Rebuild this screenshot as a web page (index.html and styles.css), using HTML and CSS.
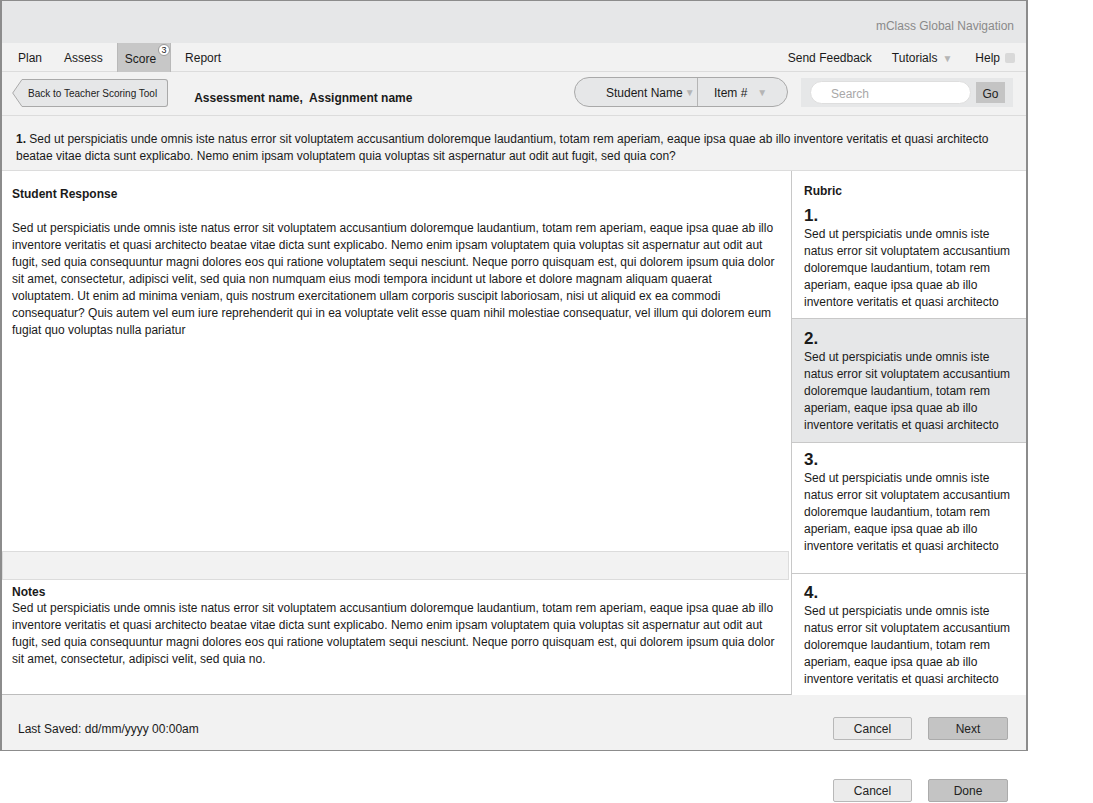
FILE: index.html
```html
<!DOCTYPE html>
<html lang="en">
<head>
<meta charset="utf-8">
<title>Teacher Scoring Tool</title>
<link rel="stylesheet" href="styles.css">
</head>
<body>
<div class="frame">
  <header class="global">mClass Global Navigation</header>

  <nav class="nav">
    <div class="nav-left">
      <span class="nav-item">Plan</span>
      <span class="nav-item">Assess</span>
      <span class="nav-item nav-tab">Score<span class="badge">3</span></span>
      <span class="nav-item">Report</span>
    </div>
    <div class="nav-right">
      <span class="nav-link">Send Feedback</span>
      <span class="nav-link">Tutorials <span class="caret">&#9660;</span></span>
      <span class="nav-link help">Help <span class="help-box"></span></span>
    </div>
  </nav>

  <div class="toolbar">
    <button class="back" type="button">
      <svg class="back-arrow" width="10" height="28" viewBox="0 0 10 28">
        <polygon points="10,0.5 0.7,14 10,27.5" fill="#e6e7e8"/>
        <polyline points="10,0.5 0.7,14 10,27.5" fill="none" stroke="#a9a9a9" stroke-width="1"/>
      </svg>
      <span class="back-body">Back to Teacher Scoring Tool</span>
    </button>
    <div class="title">Assessment name,&nbsp; Assignment name</div>
    <div class="segmented">
      <div class="seg seg-student">Student Name<span class="caret">&#9660;</span></div>
      <div class="seg seg-item">Item #<span class="caret caret-item">&#9660;</span></div>
    </div>
    <div class="search">
      <div class="search-input">Search</div>
      <button class="go" type="button">Go</button>
    </div>
  </div>

  <div class="question">
    <b>1.</b> Sed ut perspiciatis unde omnis iste natus error sit voluptatem accusantium doloremque laudantium, totam rem aperiam, eaque ipsa quae ab illo inventore veritatis et quasi architecto<br>
    beatae vitae dicta sunt explicabo. Nemo enim ipsam voluptatem quia voluptas sit aspernatur aut odit aut fugit, sed quia con?
  </div>

  <div class="main">
    <div class="left">
      <section class="response">
        <h2>Student Response</h2>
        <p>Sed ut perspiciatis unde omnis iste natus error sit voluptatem accusantium doloremque laudantium, totam rem aperiam, eaque ipsa quae ab illo<br>
        inventore veritatis et quasi architecto beatae vitae dicta sunt explicabo. Nemo enim ipsam voluptatem quia voluptas sit aspernatur aut odit aut<br>
        fugit, sed quia consequuntur magni dolores eos qui ratione voluptatem sequi nesciunt. Neque porro quisquam est, qui dolorem ipsum quia dolor<br>
        sit amet, consectetur, adipisci velit, sed quia non numquam eius modi tempora incidunt ut labore et dolore magnam aliquam quaerat<br>
        voluptatem. Ut enim ad minima veniam, quis nostrum exercitationem ullam corporis suscipit laboriosam, nisi ut aliquid ex ea commodi<br>
        consequatur? Quis autem vel eum iure reprehenderit qui in ea voluptate velit esse quam nihil molestiae consequatur, vel illum qui dolorem eum<br>
        fugiat quo voluptas nulla pariatur</p>
      </section>
      <div class="strip"></div>
      <section class="notes">
        <h2>Notes</h2>
        <p>Sed ut perspiciatis unde omnis iste natus error sit voluptatem accusantium doloremque laudantium, totam rem aperiam, eaque ipsa quae ab illo<br>
        inventore veritatis et quasi architecto beatae vitae dicta sunt explicabo. Nemo enim ipsam voluptatem quia voluptas sit aspernatur aut odit aut<br>
        fugit, sed quia consequuntur magni dolores eos qui ratione voluptatem sequi nesciunt. Neque porro quisquam est, qui dolorem ipsum quia dolor<br>
        sit amet, consectetur, adipisci velit, sed quia no.</p>
      </section>
    </div>

    <aside class="rubric">
      <h2>Rubric</h2>
      <div class="r-item r-1">
        <div class="r-num">1.</div>
        <p>Sed ut perspiciatis unde omnis iste<br>natus error sit voluptatem accusantium<br>doloremque laudantium, totam rem<br>aperiam, eaque ipsa quae ab illo<br>inventore veritatis et quasi architecto</p>
      </div>
      <div class="r-item r-2 selected">
        <div class="r-num">2.</div>
        <p>Sed ut perspiciatis unde omnis iste<br>natus error sit voluptatem accusantium<br>doloremque laudantium, totam rem<br>aperiam, eaque ipsa quae ab illo<br>inventore veritatis et quasi architecto</p>
      </div>
      <div class="r-item r-3">
        <div class="r-num">3.</div>
        <p>Sed ut perspiciatis unde omnis iste<br>natus error sit voluptatem accusantium<br>doloremque laudantium, totam rem<br>aperiam, eaque ipsa quae ab illo<br>inventore veritatis et quasi architecto</p>
      </div>
      <div class="r-item r-4">
        <div class="r-num">4.</div>
        <p>Sed ut perspiciatis unde omnis iste<br>natus error sit voluptatem accusantium<br>doloremque laudantium, totam rem<br>aperiam, eaque ipsa quae ab illo<br>inventore veritatis et quasi architecto</p>
      </div>
    </aside>
  </div>

  <footer class="footer">
    <span class="saved">Last Saved: dd/mm/yyyy 00:00am</span>
    <div class="actions">
      <button class="btn" type="button">Cancel</button>
      <button class="btn btn-primary" type="button">Next</button>
    </div>
  </footer>
</div>

<div class="outer-actions">
  <button class="btn" type="button">Cancel</button>
  <button class="btn btn-primary" type="button">Done</button>
</div>
</body>
</html>
```

FILE: styles.css
```css
* { box-sizing: border-box; }

body {
  margin: 0;
  font-family: "Liberation Sans", Arial, sans-serif;
  font-size: 12px;
  color: #1a1a1a;
  background: #ffffff;
}

button { font-family: inherit; }

.frame {
  width: 1028px;
  border: 1px solid #8c8c8c;
  border-left-width: 2px;
  border-right-width: 2px;
}

/* global header */
.global {
  height: 42px;
  background: #e6e7e8;
  display: flex;
  justify-content: flex-end;
  align-items: flex-start;
  padding: 18px 12px 0 0;
  line-height: 14px;
  color: #8a8a8a;
}

/* nav */
.nav {
  height: 29px;
  background: #f2f2f2;
  border-bottom: 1px solid #dcdcdc;
  display: flex;
  align-items: stretch;
}
.nav-left {
  display: flex;
  gap: 6px;
  padding-left: 8px;
}
.nav-item {
  display: flex;
  align-items: center;
  padding: 2px 8px 0;
  color: #1a1a1a;
}
.nav-tab {
  position: relative;
  background: #c7c7c7;
  border-left: 1px solid #b9b9b9;
  border-right: 1px solid #b9b9b9;
  padding: 2px 14px 0 7px;
  margin-bottom: -1px;
}
.badge {
  position: absolute;
  top: 1px;
  right: 0;
  width: 12px;
  height: 12px;
  border-radius: 50%;
  background: #ffffff;
  border: 1px solid #9a9a9a;
  font-size: 9px;
  line-height: 10px;
  text-align: center;
  color: #222;
}
.nav-right {
  margin-left: auto;
  display: flex;
  align-items: center;
  padding: 2px 11px 0 0;
}
.nav-link {
  display: flex;
  align-items: center;
}
.nav-link + .nav-link { margin-left: 20px; }
.nav-link.help { margin-left: 23px; }
.caret {
  color: #b5b5b5;
  font-size: 10px;
  margin-left: 5px;
}
.help-box {
  display: inline-block;
  width: 10px;
  height: 10px;
  border-radius: 2px;
  background: #d9d9d9;
  margin-left: 5px;
}

/* toolbar */
.toolbar {
  height: 44px;
  background: #f2f2f2;
  border-bottom: 1px solid #dcdcdc;
  display: flex;
  align-items: flex-start;
  padding: 0 13px 0 10px;
}
.back {
  display: flex;
  align-items: stretch;
  margin-top: 7px;
  height: 28px;
  padding: 0;
  border: 0;
  background: transparent;
}
.back-arrow { display: block; flex: none; }
.back-body {
  display: flex;
  align-items: center;
  background: #e6e7e8;
  border: 1px solid #a9a9a9;
  border-left: 0;
  border-radius: 0 3px 3px 0;
  padding: 1px 10px 0 6px;
  font-size: 10px;
  color: #222;
  white-space: nowrap;
}
.title {
  margin: 19px 0 0 26px;
  font-weight: bold;
  line-height: 14px;
  white-space: nowrap;
}
.segmented {
  margin: 5px 0 0 auto;
  height: 30px;
  display: flex;
  border: 1px solid #a9a9a9;
  border-radius: 15px;
  background: #e6e7e8;
  overflow: hidden;
}
.seg {
  display: flex;
  align-items: center;
  padding-top: 1px;
  white-space: nowrap;
}
.seg .caret { margin-left: 2px; }
.seg-student {
  width: 123px;
  padding-left: 31px;
  border-right: 1px solid #b5b5b5;
}
.seg-item {
  width: 89px;
  padding-left: 16px;
}
.seg-item .caret-item { margin-left: 10px; }
.search {
  margin: 6px 0 0 13px;
  width: 212px;
  height: 29px;
  background: #e6e7e8;
  display: flex;
  align-items: center;
  padding: 0 8px 0 9px;
}
.search-input {
  width: 161px;
  height: 23px;
  background: #ffffff;
  border: 1px solid #dedede;
  border-radius: 12px;
  color: #a8a8a8;
  line-height: 21px;
  padding: 2px 0 0 20px;
}
.go {
  margin-left: 5px;
  width: 29px;
  height: 21px;
  border: 0;
  background: #c4c4c4;
  font-size: 12px;
  color: #222;
  padding: 2px 0 0;
}

/* question */
.question {
  height: 55px;
  background: #f2f2f2;
  border-bottom: 1px solid #dcdcdc;
  padding: 15px 16px 0 14px;
  line-height: 17px;
  white-space: nowrap;
}

/* main */
.main {
  height: 524px;
  display: flex;
}
.left {
  width: 789px;
  display: flex;
  flex-direction: column;
}
.response {
  flex: 1;
  padding: 16px 10px 0;
}
.response h2,
.notes h2,
.rubric h2 {
  margin: 0;
  font-size: 12px;
  font-weight: bold;
  line-height: 14px;
}
.response h2 { margin-bottom: 19px; }
.response p,
.notes p {
  margin: 0;
  line-height: 17px;
  white-space: nowrap;
}
.strip {
  height: 29px;
  background: #f2f2f2;
  border: 1px solid #dcdcdc;
  margin-right: 2px;
}
.notes {
  height: 115px;
  border-bottom: 1px solid #bdbdbd;
  padding: 4px 10px 0;
}
.notes h2 { line-height: 16px; }

/* rubric */
.rubric {
  flex: 1;
  border-left: 1px solid #c8c8c8;
  display: flex;
  flex-direction: column;
}
.rubric h2 {
  height: 29px;
  padding: 13px 12px 0;
}
.r-item {
  padding: 6px 12px 0;
  border-bottom: 1px solid #c8c8c8;
}
.r-item p {
  margin: 0;
  line-height: 17px;
  white-space: nowrap;
}
.r-num {
  font-size: 17px;
  font-weight: bold;
  line-height: 21px;
}
.r-1 { height: 119px; padding-top: 5px; }
.r-2 { height: 124px; padding-top: 9px; }
.r-3 { height: 131px; padding-top: 6px; }
.r-4 { height: 121px; padding-top: 8px; border-bottom: 0; }
.selected { background: #e6e7e8; }

/* footer */
.footer {
  height: 55px;
  background: #f2f2f2;
  display: flex;
  align-items: center;
  padding: 12px 18px 0 16px;
}
.actions,
.outer-actions {
  display: flex;
  gap: 16px;
}
.actions { margin-left: auto; }
.outer-actions {
  width: 1028px;
  justify-content: flex-end;
  padding-right: 20px;
  margin-top: 28px;
}
.btn {
  width: 79px;
  height: 23px;
  border: 1px solid #b8b8b8;
  border-radius: 2px;
  background: #ebebeb;
  font-size: 12px;
  color: #222;
  padding: 0;
}
.btn-primary {
  width: 80px;
  background: #c4c4c4;
  border-color: #ababab;
}
```
